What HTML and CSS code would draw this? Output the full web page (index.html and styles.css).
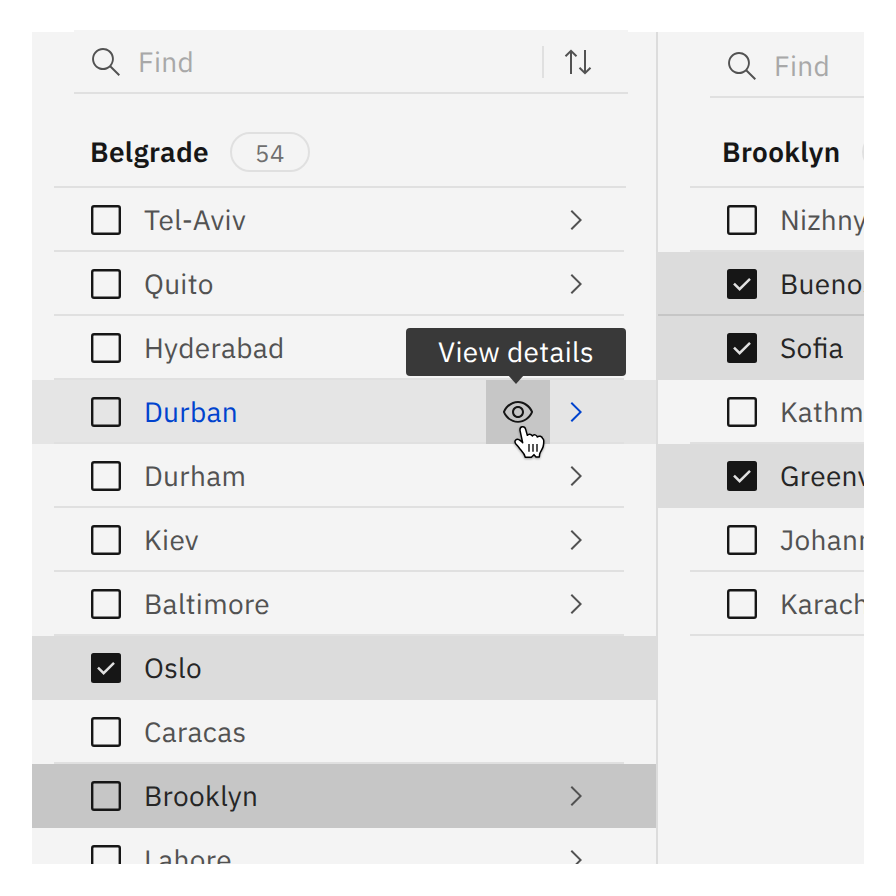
FILE: index.html
```
<!DOCTYPE html>
<html lang="en">
<head>
<meta charset="utf-8">
<title>Cities</title>
<link rel="stylesheet" href="styles.css">
</head>
<body>
<svg class="defs" aria-hidden="true">
  <symbol id="search" viewBox="0 0 16 16"><path d="M15 14.3L10.7 10c1.9-2.3 1.6-5.8-.7-7.7S4.2.7 2.3 3 .7 8.8 3 10.7c2 1.7 5 1.7 7 0l4.3 4.3.7-.7zM2 6.5C2 4 4 2 6.500 2S11 4 11 6.500 9 11 6.500 11 2 9 2 6.500z"/></symbol>
  <symbol id="chevron" viewBox="0 0 16 16"><path d="M11 8L6 13 5.3 12.3 9.6 8 5.3 3.7 6 3z"/></symbol>
  <symbol id="box" viewBox="0 0 30 30"><rect x="1.2" y="1.2" width="27.600" height="27.600" rx="1.800" fill="none" stroke="#161616" stroke-width="2.400"/></symbol>
  <symbol id="checked" viewBox="0 0 30 30"><rect width="30" height="30" rx="2.500" fill="#161616"/><path d="M7 14.600L12.600 20.200L23 9.800" fill="none" stroke="#e0e0e0" stroke-width="2.500"/></symbol>
</svg>
<main class="frame">
  <section class="column column-left">
    <div class="search">
      <svg class="icon"><use href="#search"/></svg>
      <span class="placeholder">Find</span>
      <span class="separator"></span>
      <svg class="sort" viewBox="0 0 28 26"><path d="M7 25V2M1.500 7.300L7 1.800L12.500 7.300M21 1V24M15.500 18.700L21 24.200L26.500 18.700"/></svg>
    </div>
    <header class="heading"><h2>Belgrade</h2><span class="badge">54</span></header>
    <ul class="rows">
      <li class="row"><svg class="check"><use href="#box"/></svg><span class="label">Tel-Aviv</span><svg class="icon"><use href="#chevron"/></svg></li>
      <li class="row"><svg class="check"><use href="#box"/></svg><span class="label">Quito</span><svg class="icon"><use href="#chevron"/></svg></li>
      <li class="row"><svg class="check"><use href="#box"/></svg><span class="label">Hyderabad</span><svg class="icon"><use href="#chevron"/></svg></li>
      <li class="row hover"><svg class="check"><use href="#box"/></svg><span class="label">Durban</span>
        <span class="view">
          <svg class="icon" viewBox="0 0 16 16"><path d="M15.500 7.800C14.300 4.700 11.300 2.600 8 2.500 4.700 2.600 1.700 4.700.5 7.800c0 .1 0 .2 0 .3 1.200 3.100 4.100 5.200 7.500 5.300 3.300-.1 6.300-2.200 7.500-5.300 0-.1 0-.2 0-.3zM8 12.500c-2.700 0-5.400-2-6.500-4.500 1-2.500 3.800-4.500 6.500-4.500s5.400 2 6.500 4.500c-1.100 2.500-3.800 4.500-6.500 4.500z"/><path d="M8 5C6.300 5 5 6.300 5 8s1.300 3 3 3 3-1.300 3-3-1.300-3-3-3zm0 5c-1.100 0-2-.9-2-2s.9-2 2-2 2 .9 2 2-.9 2-2 2z"/></svg>
          <span class="tooltip">View details</span>
          <svg class="pointer" viewBox="366 342 102 114"><path d="M390 361C389 348 404 347 407 358L412 376C415 371 424 371 427 378C431 372 440 374 442 381C447 376 456 379 458 386C463 386 461 401 460 408C458 417 451 424 449 432L448 441L438 441L432 434L424 442L406 442C404 430 396 424 390 417C386 411 382 406 377 401C371 391 380 386 387 389C391 390 395 395 398 398Z"/><path class="folds" d="M417 402V425M429 402V425M441 402V425"/></svg>
        </span>
        <svg class="icon"><use href="#chevron"/></svg></li>
      <li class="row"><svg class="check"><use href="#box"/></svg><span class="label">Durham</span><svg class="icon"><use href="#chevron"/></svg></li>
      <li class="row"><svg class="check"><use href="#box"/></svg><span class="label">Kiev</span><svg class="icon"><use href="#chevron"/></svg></li>
      <li class="row"><svg class="check"><use href="#box"/></svg><span class="label">Baltimore</span><svg class="icon"><use href="#chevron"/></svg></li>
      <li class="row selected"><svg class="check"><use href="#checked"/></svg><span class="label">Oslo</span></li>
      <li class="row"><svg class="check"><use href="#box"/></svg><span class="label">Caracas</span></li>
      <li class="row active"><svg class="check"><use href="#box"/></svg><span class="label">Brooklyn</span><svg class="icon"><use href="#chevron"/></svg></li>
      <li class="row"><svg class="check"><use href="#box"/></svg><span class="label">Lahore</span><svg class="icon"><use href="#chevron"/></svg></li>
    </ul>
  </section>
  <section class="column column-right">
    <div class="search">
      <svg class="icon"><use href="#search"/></svg>
      <span class="placeholder">Find</span>
    </div>
    <header class="heading"><h2>Brooklyn</h2><span class="badge"></span></header>
    <ul class="rows">
      <li class="row"><svg class="check"><use href="#box"/></svg><span class="label">Nizhny</span></li>
      <li class="row selected joined"><svg class="check"><use href="#checked"/></svg><span class="label">Buenos</span></li>
      <li class="row selected"><svg class="check"><use href="#checked"/></svg><span class="label">Sofia</span></li>
      <li class="row"><svg class="check"><use href="#box"/></svg><span class="label">Kathma</span></li>
      <li class="row selected"><svg class="check"><use href="#checked"/></svg><span class="label">Greenv</span></li>
      <li class="row"><svg class="check"><use href="#box"/></svg><span class="label">Johann</span></li>
      <li class="row"><svg class="check"><use href="#box"/></svg><span class="label">Karach</span></li>
    </ul>
  </section>
</main>
</body>
</html>
```
FILE: styles.css
```
* { box-sizing: border-box; }
body {
  margin: 0;
  height: 896px;
  padding: 30px 32px 32px;
  background: #fff;
  color: #525252;
  font: 28px/36px "IBM Plex Sans", "Noto Sans", sans-serif;
  letter-spacing: .32px;
  font-feature-settings: "liga" 1;
  text-rendering: geometricPrecision;
  overflow: hidden;
}
svg { display: block; flex: none; }
.defs { position: absolute; width: 0; height: 0; }
.frame {
  display: flex;
  width: 832px;
  height: 834px;
  padding-top: 2px;
  background: #f4f4f4 content-box;
  overflow: hidden;
}
.column { flex: none; }
.column-left { width: 626px; border-right: 2px solid #dcdcdc; }
.column-right { width: 626px; }
.icon { width: 32px; height: 32px; fill: #525252; }

.search {
  display: flex;
  align-items: center;
  height: 64px;
  padding-left: 16px;
  background: #f4f4f4;
  border-bottom: 2px solid #e0e0e0;
}
.column-left .search { width: 554px; margin: -2px 0 0 42px; padding-top: 2px; }
.column-right .search { width: 554px; margin: 2px 0 0 52px; padding-top: 2px; }
.placeholder { flex: 1; margin-left: 16px; color: #a8a8a8; }
.separator { width: 2px; height: 32px; margin-right: 20px; background: #e0e0e0; }
.sort { width: 28px; height: 26px; margin-right: 36px; fill: none; stroke: #525252; stroke-width: 2; }

.heading {
  display: flex;
  align-items: center;
  height: 94px;
  padding-top: 24px;
  border-bottom: 2px solid #e0e0e0;
}
.column-left .heading { width: 572px; margin-left: 22px; padding-left: 36px; }
.column-right .heading { height: 90px; padding-top: 20px; width: 572px; margin-left: 32px; padding-left: 32px; }
h2 { width: 140px; margin: 0; color: #161616; font-size: 28px; font-weight: 600; }
.badge {
  width: 80px;
  height: 40px;
  border: 2px solid #e0e0e0;
  border-radius: 20px;
  color: #6f6f6f;
  font-size: 24px;
  line-height: 38px;
  letter-spacing: .64px;
  text-align: center;
}

.rows { margin: 0; padding: 0; list-style: none; }
.row {
  display: flex;
  align-items: center;
  height: 64px;
  padding: 0 64px 0 59px;
  background: linear-gradient(#e0e0e0, #e0e0e0) 22px 100% / 570px 2px no-repeat;
}
.column-right .row { padding-left: 69px; background-position: 32px 100%; }
.check { width: 30px; height: 30px; }
.label { flex: 1; margin-left: 23px; white-space: nowrap; }
.row.selected, .column-right .row.selected { background: #dcdcdc; color: #262626; }
.column-right .row.joined { background: linear-gradient(#c6c6c6, #c6c6c6) 0 100% / 100% 2px no-repeat #dcdcdc; }
.row.active { background: #c6c6c6; color: #262626; }
.row.hover { background-color: #e5e5e5; color: #0043ce; }
.row.hover > .icon { fill: #0043ce; }

.view {
  position: relative;
  display: flex;
  align-items: center;
  justify-content: center;
  width: 64px;
  height: 64px;
  margin-right: 10px;
  background: #c6c6c6;
}
.view .icon { fill: #161616; }
.tooltip {
  position: absolute;
  left: -80px;
  top: -52px;
  width: 220px;
  height: 48px;
  border-radius: 4px;
  background: #393939;
  color: #fff;
  line-height: 48px;
  text-align: center;
}
.tooltip::after {
  content: "";
  position: absolute;
  left: 102px;
  top: 47px;
  border: solid transparent;
  border-width: 9px 8px 0;
  border-top-color: #393939;
}
.pointer {
  position: absolute;
  left: 26px;
  top: 44px;
  width: 34px;
  height: 38px;
  fill: #fff;
  stroke: #000;
  stroke-width: 4.500;
  stroke-linejoin: round;
  overflow: visible;
  filter: drop-shadow(0 1.500px 1px rgba(0, 0, 0, .35));
}
.folds { stroke-width: 4; }
```
